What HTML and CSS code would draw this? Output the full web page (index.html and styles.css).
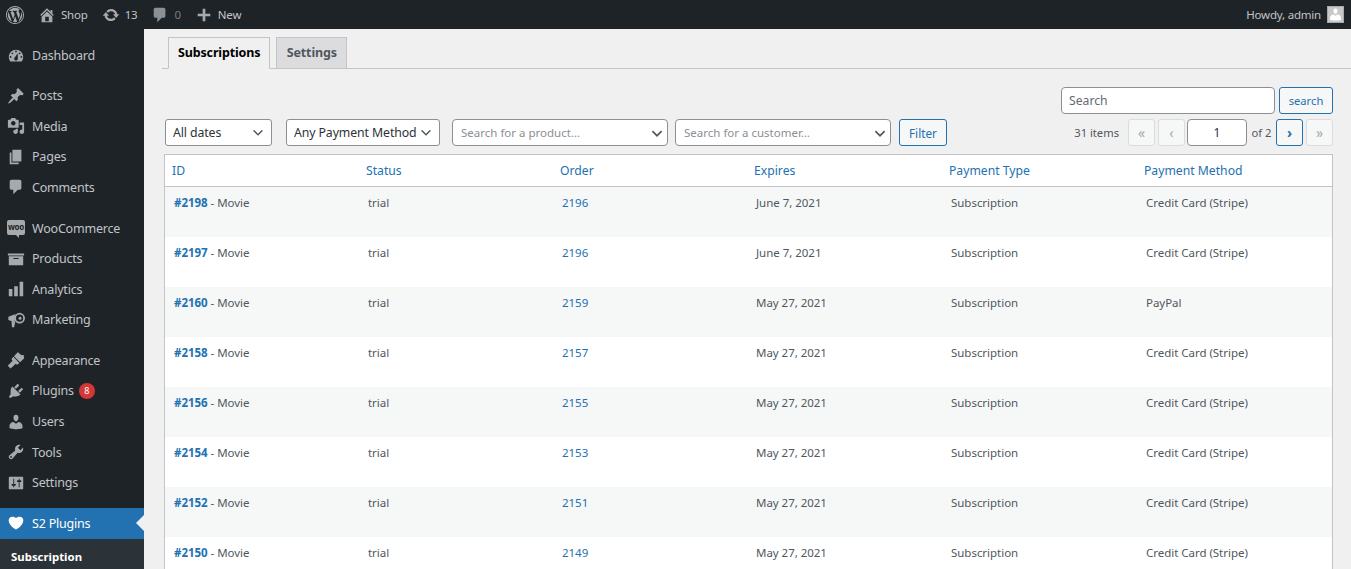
FILE: index.html
```html
<!DOCTYPE html>
<html lang="en">
<head>
<meta charset="utf-8">
<title>Subscriptions</title>
<link rel="stylesheet" href="styles.css">
</head>
<body>
<svg class="defs" width="0" height="0" aria-hidden="true">
  <symbol id="i-wp" viewBox="0 0 20 20"><path fill-rule="evenodd" d="M20 10c0-5.52-4.48-10-10-10S0 4.48 0 10s4.48 10 10 10 10-4.48 10-10zM10 1.01c4.96 0 8.99 4.02 8.99 8.99s-4.03 8.99-8.99 8.99S1.01 14.96 1.01 10 5.04 1.01 10 1.01zM8.01 14.82L4.96 6.61c.49-.03 1.05-.08 1.05-.08.43-.05.38-1.01-.06-.99 0 0-1.29.1-2.13.1-.15 0-.33 0-.52-.01 1.44-2.17 3.9-3.6 6.7-3.6 2.09 0 3.99.79 5.41 2.09-.6-.08-1.45.35-1.45 1.42 0 .66.38 1.22.79 1.88.31.54.5 1.22.5 2.21 0 1.34-1.27 4.48-1.27 4.48l-2.71-7.5c.48-.03.75-.16.75-.16.43-.05.38-1.1-.05-1.08 0 0-1.3.11-2.14.11-.78 0-2.11-.11-2.11-.11-.43-.02-.48 1.06-.05 1.08l.84.08 1.12 3.04zm6.02 2.15L16.64 10s.67-1.69.39-3.81c.63 1.14.94 2.42.94 3.81 0 2.96-1.56 5.58-3.94 7.1zM2.68 6.77L6.5 17.25c-2.67-1.3-4.47-4.08-4.47-7.25 0-1.16.2-2.23.65-3.23zm7.45 4.53l2.29 6.25c-.75.27-1.57.42-2.42.42-.72 0-1.41-.11-2.06-.3z"/></symbol>
  <symbol id="i-home" viewBox="0 0 20 20"><path fill-rule="evenodd" d="M16 8.5l1.53 1.53-1.06 1.06L10 4.62l-6.47 6.47-1.06-1.06L10 2.5l4 4v-2h2v4zm-6-2.46l6 5.99V18H4v-5.97zM12 17v-5H8v5h4z"/></symbol>
  <symbol id="i-update" viewBox="0 0 20 20"><path d="M10.2 3.28c3.53 0 6.43 2.61 6.92 6h2.08l-3.5 4-3.5-4h2.32c-.45-1.97-2.21-3.45-4.32-3.45-1.45 0-2.73.71-3.54 1.78L4.95 5.66C6.23 4.2 8.11 3.28 10.2 3.28zm-.4 13.44c-3.52 0-6.43-2.61-6.92-6H.8l3.5-4c1.17 1.33 2.33 2.67 3.5 4H5.48c.45 1.97 2.21 3.45 4.32 3.45 1.45 0 2.73-.71 3.54-1.78l1.71 1.95c-1.28 1.46-3.15 2.38-5.25 2.38z"/></symbol>
  <symbol id="i-comment" viewBox="0 0 20 20"><path d="M5 2h9c1.1 0 2 .9 2 2v7c0 1.1-.9 2-2 2h-2l-5 5v-5H5c-1.1 0-2-.9-2-2V4c0-1.1.9-2 2-2z"/></symbol>
  <symbol id="i-plus" viewBox="0 0 20 20"><path d="M17 8.500v3h-5.500V17h-3v-5.500H3v-3h5.500V3h3v5.500z"/></symbol>
  <symbol id="i-dash" viewBox="0 0 20 20"><path fill-rule="evenodd" d="M3.76 16h12.48c1.1-1.37 1.76-3.11 1.76-5 0-4.42-3.58-8-8-8s-8 3.58-8 8c0 1.89.66 3.63 1.76 5zM10 4c.55 0 1 .45 1 1s-.45 1-1 1-1-.45-1-1 .45-1 1-1zM6 6c.55 0 1 .45 1 1s-.45 1-1 1-1-.45-1-1 .45-1 1-1zm8 0c.55 0 1 .45 1 1s-.45 1-1 1-1-.45-1-1 .45-1 1-1zm-5.370 5.550L12 7v6c0 1.100-.9 2-2 2s-2-.9-2-2c0-.57.24-1.080.63-1.450zM4 10c.55 0 1 .45 1 1s-.45 1-1 1-1-.45-1-1 .45-1 1-1zm12 0c.55 0 1 .45 1 1s-.45 1-1 1-1-.45-1-1 .45-1 1-1z"/></symbol>
  <symbol id="i-pin" viewBox="0 0 20 20"><path d="M10.44 3.020l1.820-1.820 6.360 6.350-1.830 1.820c-1.050-.68-2.480-.57-3.410.36l-.75.75c-.92.93-1.040 2.350-.35 3.410l-1.830 1.820-2.410-2.410-2.800 2.790c-.42.42-3.380 2.710-3.800 2.290s1.860-3.390 2.280-3.810l2.790-2.790L4.100 9.360l1.830-1.820c1.050.69 2.480.57 3.400-.36l.75-.75c.93-.92 1.050-2.350.36-3.410z"/></symbol>
  <symbol id="i-media" viewBox="0 0 20 20"><path fill-rule="evenodd" d="M13 11V4c0-.55-.45-1-1-1h-1.670L9 1H5L3.670 3H2c-.55 0-1 .45-1 1v7c0 .55.45 1 1 1h10c.55 0 1-.45 1-1zM7 4.500c1.380 0 2.500 1.120 2.500 2.500S8.380 9.500 7 9.500 4.500 8.380 4.500 7 5.620 4.500 7 4.500zM14 6h5v10.500c0 1.380-1.120 2.500-2.500 2.500S14 17.880 14 16.500s1.120-2.500 2.500-2.500c.17 0 .34.02.5.05V9h-3V6zm-4 8.050V13h2v3.500c0 1.380-1.120 2.500-2.500 2.500S7 17.880 7 16.500 8.120 14 9.500 14c.17 0 .34.02.5.05z"/></symbol>
  <symbol id="i-page" viewBox="0 0 20 20"><path d="M6 15V2h10v13H6zm-1 1h8v2H3V5h2v11z"/></symbol>
  <symbol id="i-archive" viewBox="0 0 20 20"><path fill-rule="evenodd" d="M19 4v2H1V4h18zM2 7h16v10H2V7zm11 3V9H7v1h6z"/></symbol>
  <symbol id="i-chart" viewBox="0 0 20 20"><path d="M18 18V2h-4v16h4zm-6 0V7H8v11h4zm-6 0v-8H2v8h4z"/></symbol>
  <symbol id="i-mega" viewBox="0 0 20 20"><path fill-rule="evenodd" d="M1.500 6.500L9.500 3.200c-.9 1.300-1.400 3-1.400 4.800s.5 3.500 1.400 4.800L1.500 10zM5 11l4 1.400-1 5.600H5.500zM14 2a6 6 0 1 1 0 12 6 6 0 0 1 0-12zm0 2a4 4 0 1 0 0 8 4 4 0 0 0 0-8zm.500 2.300a1.700 1.700 0 1 1 0 3.400 1.700 1.700 0 0 1 0-3.400z"/></symbol>
  <symbol id="i-brush" viewBox="0 0 20 20"><path d="M12 1.500c1.500.8 2.200 2 3.500 2.800 1.200.7 2.200.5 3.500.2-.4 1.300-.5 2.300.2 3.500L14.500 12.500 7.700 5.700zM7 6.500l6.700 6.700-1.600 1.600c-.5.5-1.200.5-1.700 0l-.7-.7L4 19.500 .8 16.300l5.400-5.600-.7-.7c-.5-.5-.5-1.200 0-1.700z"/></symbol>
  <symbol id="i-plug" viewBox="0 0 20 20"><path d="M13.110 4.360L9.870 7.600 8 5.730l3.240-3.240c.35-.34 1.050-.2 1.560.32.52.51.66 1.210.31 1.550zm-8 1.770l.91-1.120 9.010 9.010-1.190.84c-.71.71-2.630 1.160-3.820 1.160H6.140L4.900 17.260c-.59.59-1.540.59-2.120 0-.59-.58-.59-1.530 0-2.120l1.240-1.240v-3.880c0-1.130.4-3.190 1.090-3.890zm7.260 3.970l3.240-3.240c.34-.35 1.040-.21 1.550.31.52.51.66 1.210.31 1.550l-3.240 3.250z"/></symbol>
  <symbol id="i-user" viewBox="0 0 20 20"><path d="M10 9.250c-2.270 0-2.730-3.440-2.730-3.440C7 4.020 7.820 2 9.970 2c2.160 0 2.980 2.020 2.710 3.810 0 0-.41 3.440-2.680 3.440zm0 2.570L12.720 10c2.390 0 4.520 2.330 4.520 4.530v2.490s-3.650 1.130-7.240 1.130c-3.650 0-7.240-1.130-7.240-1.130v-2.490c0-2.250 1.940-4.480 4.470-4.480z"/></symbol>
  <symbol id="i-tool" viewBox="0 0 20 20"><path fill-rule="evenodd" d="M16.680 9.770c-1.340 1.340-3.300 1.670-4.950.99l-5.410 6.520c-.99.99-2.590.99-3.580 0s-.99-2.590 0-3.570l6.520-5.420c-.68-1.650-.35-3.610.99-4.950 1.280-1.280 3.120-1.620 4.720-1.060l-2.890 2.890 2.820 2.820 2.860-2.870c.53 1.580.18 3.390-1.080 4.650zM3.810 16.210c.4.39 1.040.39 1.430 0 .4-.4.4-1.040 0-1.430-.39-.4-1.030-.4-1.430 0-.39.39-.39 1.030 0 1.430z"/></symbol>
  <symbol id="i-set" viewBox="0 0 20 20"><path fill-rule="evenodd" d="M18 16V4c0-.55-.45-1-1-1H3c-.55 0-1 .45-1 1v12c0 .55.45 1 1 1h14c.55 0 1-.45 1-1zM8 11h1c.55 0 1 .45 1 1s-.45 1-1 1H8v1.500c0 .28-.22.5-.5.5s-.5-.22-.5-.5V13H6c-.55 0-1-.45-1-1s.45-1 1-1h1V5.500c0-.28.22-.5.5-.5s.5.22.5.5V11zm5-2h-1c-.55 0-1-.45-1-1s.45-1 1-1h1V5.500c0-.28.22-.5.5-.5s.5.22.5.5V7h1c.55 0 1 .45 1 1s-.45 1-1 1h-1v5.500c0 .28-.22.5-.5.5s-.5-.22-.5-.5V9z"/></symbol>
  <symbol id="i-heart" viewBox="0 0 20 20"><path d="M10 17.120c3.330-1.400 5.740-3.790 7.040-6.210 1.280-2.410 1.460-4.810.32-6.250-1.030-1.290-2.370-1.780-3.730-1.740s-2.680.63-3.630 1.460c-.95-.83-2.270-1.420-3.630-1.460s-2.700.45-3.730 1.740c-1.140 1.440-.96 3.840.34 6.250 1.280 2.420 3.690 4.810 7.020 6.210z"/></symbol>
  <symbol id="i-chev" viewBox="0 0 20 20"><path d="M5 7l5 5 5-5 1.500 1.500L10 15 3.500 8.500z"/></symbol>
</svg>

<header class="adminbar">
  <nav class="bar-left">
    <a class="bar-item logo"><svg class="bar-icon"><use href="#i-wp"/></svg></a>
    <a class="bar-item"><svg class="bar-icon"><use href="#i-home"/></svg>Shop</a>
    <a class="bar-item"><svg class="bar-icon"><use href="#i-update"/></svg>13</a>
    <a class="bar-item dim"><svg class="bar-icon"><use href="#i-comment"/></svg>0</a>
    <a class="bar-item"><svg class="bar-icon"><use href="#i-plus"/></svg>New</a>
  </nav>
  <a class="howdy">Howdy, admin<span class="avatar"><svg viewBox="0 0 20 20"><use href="#i-user"/></svg></span></a>
</header>

<div class="shell">
  <aside class="sidebar">
    <ul class="menu">
      <li class="nudge"><svg class="m-icon"><use href="#i-dash"/></svg>Dashboard</li>
      <li class="sep"><svg class="m-icon"><use href="#i-pin"/></svg>Posts</li>
      <li><svg class="m-icon"><use href="#i-media"/></svg>Media</li>
      <li><svg class="m-icon"><use href="#i-page"/></svg>Pages</li>
      <li><svg class="m-icon"><use href="#i-comment"/></svg>Comments</li>
      <li class="sep nudge"><span class="woo">woo</span>WooCommerce</li>
      <li><svg class="m-icon"><use href="#i-archive"/></svg>Products</li>
      <li><svg class="m-icon"><use href="#i-chart"/></svg>Analytics</li>
      <li><svg class="m-icon"><use href="#i-mega"/></svg>Marketing</li>
      <li class="sep"><svg class="m-icon"><use href="#i-brush"/></svg>Appearance</li>
      <li><svg class="m-icon"><use href="#i-plug"/></svg>Plugins<span class="count">8</span></li>
      <li><svg class="m-icon"><use href="#i-user"/></svg>Users</li>
      <li><svg class="m-icon"><use href="#i-tool"/></svg>Tools</li>
      <li><svg class="m-icon"><use href="#i-set"/></svg>Settings</li>
      <li class="sep current"><svg class="m-icon"><use href="#i-heart"/></svg>S2 Plugins</li>
      <li class="sub">Subscription</li>
    </ul>
  </aside>

  <main class="content">
    <div class="tabs">
      <a class="tab active">Subscriptions</a>
      <a class="tab">Settings</a>
    </div>

    <form class="search-row">
      <input class="search-input" type="text" placeholder="Search">
      <button class="btn btn-search" type="button">search</button>
    </form>

    <div class="filter-row">
      <select class="sel w-date"><option>All dates</option></select>
      <select class="sel w-pay"><option>Any Payment Method</option></select>
      <span class="combo w-prod">Search for a product…<svg class="chev"><use href="#i-chev"/></svg></span>
      <span class="combo w-cust">Search for a customer…<svg class="chev"><use href="#i-chev"/></svg></span>
      <button class="btn filter" type="button">Filter</button>
      <div class="pager">
        <span class="items">31 items</span>
        <span class="pg off">«</span>
        <span class="pg off">‹</span>
        <input class="pg-input" type="text" value="1">
        <span class="of">of 2</span>
        <a class="pg on">›</a>
        <span class="pg off">»</span>
      </div>
    </div>

    <table class="list">
      <thead>
        <tr><th>ID</th><th>Status</th><th>Order</th><th>Expires</th><th>Payment Type</th><th>Payment Method</th></tr>
      </thead>
      <tbody>
        <tr><td><a class="strong">#2198</a> - Movie</td><td>trial</td><td><a>2196</a></td><td>June 7, 2021</td><td>Subscription</td><td>Credit Card (Stripe)</td></tr>
        <tr><td><a class="strong">#2197</a> - Movie</td><td>trial</td><td><a>2196</a></td><td>June 7, 2021</td><td>Subscription</td><td>Credit Card (Stripe)</td></tr>
        <tr><td><a class="strong">#2160</a> - Movie</td><td>trial</td><td><a>2159</a></td><td>May 27, 2021</td><td>Subscription</td><td>PayPal</td></tr>
        <tr><td><a class="strong">#2158</a> - Movie</td><td>trial</td><td><a>2157</a></td><td>May 27, 2021</td><td>Subscription</td><td>Credit Card (Stripe)</td></tr>
        <tr><td><a class="strong">#2156</a> - Movie</td><td>trial</td><td><a>2155</a></td><td>May 27, 2021</td><td>Subscription</td><td>Credit Card (Stripe)</td></tr>
        <tr><td><a class="strong">#2154</a> - Movie</td><td>trial</td><td><a>2153</a></td><td>May 27, 2021</td><td>Subscription</td><td>Credit Card (Stripe)</td></tr>
        <tr><td><a class="strong">#2152</a> - Movie</td><td>trial</td><td><a>2151</a></td><td>May 27, 2021</td><td>Subscription</td><td>Credit Card (Stripe)</td></tr>
        <tr><td><a class="strong">#2150</a> - Movie</td><td>trial</td><td><a>2149</a></td><td>May 27, 2021</td><td>Subscription</td><td>Credit Card (Stripe)</td></tr>
      </tbody>
    </table>
  </main>
</div>
</body>
</html>
```
FILE: styles.css
```css
* { box-sizing: border-box; }
html, body { height: 100%; }
body {
  margin: 0;
  overflow: hidden;
  background: #f0f0f1;
  color: #50575e;
  font-family: "Noto Sans", sans-serif;
  font-size: 12px;
}
a { color: #2271b1; text-decoration: none; }
.defs { position: absolute; }

.adminbar {
  height: 29px;
  background: #1d2327;
  color: #c3c4c7;
  display: flex;
  justify-content: space-between;
  align-items: center;
  font-size: 11.500px;
  letter-spacing: -0.2px;
  padding-right: 7px;
}
.bar-left { display: flex; align-items: center; height: 100%; }
.bar-item { display: flex; align-items: center; color: #c3c4c7; margin-left: 14px; gap: 5px; }
.bar-item.logo { margin-left: 6px; }
.bar-item.dim { color: #787c82; }
.bar-icon { width: 18px; height: 18px; fill: #a7aaad; }
.bar-item.dim .bar-icon { fill: #8c8f94; }
.howdy { color: #c3c4c7; display: flex; align-items: center; gap: 6px; }
.avatar { width: 17px; height: 17px; background: #c8c8c8; border: 1px solid #a7aaad; display: block; overflow: hidden; }
.avatar svg { width: 15px; height: 15px; fill: #fff; display: block; }

.shell { display: flex; height: calc(100% - 29px); }
.sidebar { width: 144px; flex: none; background: #1d2327; color: #c3c4c7; padding-top: 10.750px; }
.menu { list-style: none; margin: 0; padding: 0; font-size: 12.500px; letter-spacing: -0.2px; }
.menu li { height: 30.600px; display: flex; align-items: center; padding-left: 7px; position: relative; }
.menu li.sep { margin-top: 10px; }
.menu li.nudge { padding-top: 1px; }
.m-icon { width: 18px; height: 18px; fill: #a7aaad; margin-right: 7px; flex: none; }
.woo {
  width: 18px;
  height: 15px;
  margin: -3px 7px 0 0;
  flex: none;
  position: relative;
  background: #a7aaad;
  border-radius: 2px;
  color: #1d2327;
  font-size: 8px;
  font-weight: 700;
  letter-spacing: -0.3px;
  line-height: 14px;
  text-align: center;
}
.woo::after {
  content: "";
  position: absolute;
  left: 9px;
  top: 15px;
  border-top: 3px solid #a7aaad;
  border-left: 3px solid transparent;
}
.count { margin-left: 5px; width: 16px; height: 16px; border-radius: 50%; background: #d63638; color: #fff; font-size: 9px; display: flex; align-items: center; justify-content: center; }
.menu li.current { background: #2271b1; color: #fff; }
.current .m-icon { fill: #fff; }
.current::after {
  content: "";
  position: absolute;
  right: 0;
  top: 50%;
  margin-top: -8px;
  border: 8px solid transparent;
  border-right-color: #f0f0f1;
  border-left-width: 0;
}
.menu li.sub { background: #2c3338; color: #fff; font-weight: 700; font-size: 11.400px; letter-spacing: 0; padding: 0 0 2px 11px; height: 38px; }

.content { flex: 1; min-width: 0; padding: 8px 18px 0 20px; }
.tabs { display: flex; gap: 6px; margin-left: -2px; padding-left: 6px; border-bottom: 1px solid #c3c4c7; height: 32px; margin-right: -18px; font-weight: 700; font-size: 12.500px; letter-spacing: -0.15px; }
.tab { height: 32px; padding: 0 9px 2px; border: 1px solid #c3c4c7; background: #dcdcde; color: #50575e; display: flex; align-items: center; }
.tab.active { background: #f0f0f1; border-bottom-color: #f0f0f1; color: #000; }
.tab:not(.active) { padding: 0 9.500px 2px; }

.search-row { display: flex; justify-content: flex-end; gap: 4px; margin-top: 18px; }
.search-input { width: 214px; height: 27px; border: 1px solid #8c8f94; border-radius: 4px; padding: 0 7px; font: 12.200px "Noto Sans", sans-serif; color: #2c3338; background: #fff; }
.search-input::placeholder { color: #646970; opacity: 1; }
.btn { height: 27px; border: 1px solid #2271b1; border-radius: 3px; background: #f6f7f7; color: #2271b1; font: 12px "Noto Sans", sans-serif; padding: 0 9px; }
.btn-search { width: 54px; padding: 0; font-size: 11.200px; }

.filter-row { display: flex; align-items: center; margin-top: 5px; margin-left: 1px; height: 27px; }
.sel {
  appearance: none;
  height: 27px;
  border: 1px solid #8c8f94;
  border-radius: 3px;
  background: #fff url("data:image/svg+xml;utf8,<svg xmlns='http://www.w3.org/2000/svg' viewBox='0 0 20 20' width='16' height='16'><path fill='%2350575e' d='M5 6l5 5 5-5 1 1.500-6 6-6-6z'/></svg>") no-repeat right 5px center;
  color: #2c3338;
  font: 12.300px "Noto Sans", sans-serif;
  letter-spacing: -0.1px;
  padding: 0 20px 0 7px;
  margin-right: 14px;
}
.w-date { width: 107px; }
.w-pay { width: 154px; margin-right: 12px; }
.combo {
  height: 27px;
  border: 1px solid #8c8f94;
  border-radius: 4px;
  background: #fff;
  color: #8c8f94;
  font-size: 11.500px;
  display: flex;
  align-items: center;
  justify-content: space-between;
  padding: 0 2px 0 8px;
}
.w-prod { width: 216px; margin-right: 7px; }
.w-cust { width: 216px; margin-right: 8px; }
.chev { width: 16px; height: 16px; fill: #50575e; }
.btn.filter { width: 48px; padding: 0; font-size: 11.800px; }
.pager { margin-left: auto; display: flex; align-items: center; gap: 3px; font-size: 11.200px; }
.items { margin-right: 6px; }
.pg { width: 27px; height: 27px; border-radius: 3px; display: flex; align-items: center; justify-content: center; font-size: 14px; }
.pg.off { border: 1px solid #dcdcde; background: #f6f7f7; color: #a7aaad; }
.pg.on { border: 1px solid #2271b1; background: #f6f7f7; color: #2271b1; font-weight: 700; }
.pg-input { width: 60px; height: 27px; border: 1px solid #8c8f94; border-radius: 4px; text-align: center; font: 12px "Noto Sans", sans-serif; color: #2c3338; background: #fff; margin-left: -1px; }
.of { width: 23px; text-align: center; white-space: nowrap; }

.list { width: 1169px; margin-top: 8px; border-collapse: separate; border-spacing: 0; table-layout: fixed; border: 1px solid #c3c4c7; background: #fff; }
.list th { height: 32px; width: 195px; text-align: left; font-weight: 400; font-size: 12.200px; color: #2271b1; padding: 0 7px; border-bottom: 1px solid #c3c4c7; }
.list th:nth-child(-n+3) { width: 194px; }
.list th:last-child { width: auto; }
.list td { height: 50px; vertical-align: top; padding: 9px 9px 0; line-height: 14px; font-size: 11.500px; letter-spacing: -0.03px; }
.list tbody tr:nth-child(odd) { background: #f6f7f7; }
.strong { font-weight: 700; }
```
